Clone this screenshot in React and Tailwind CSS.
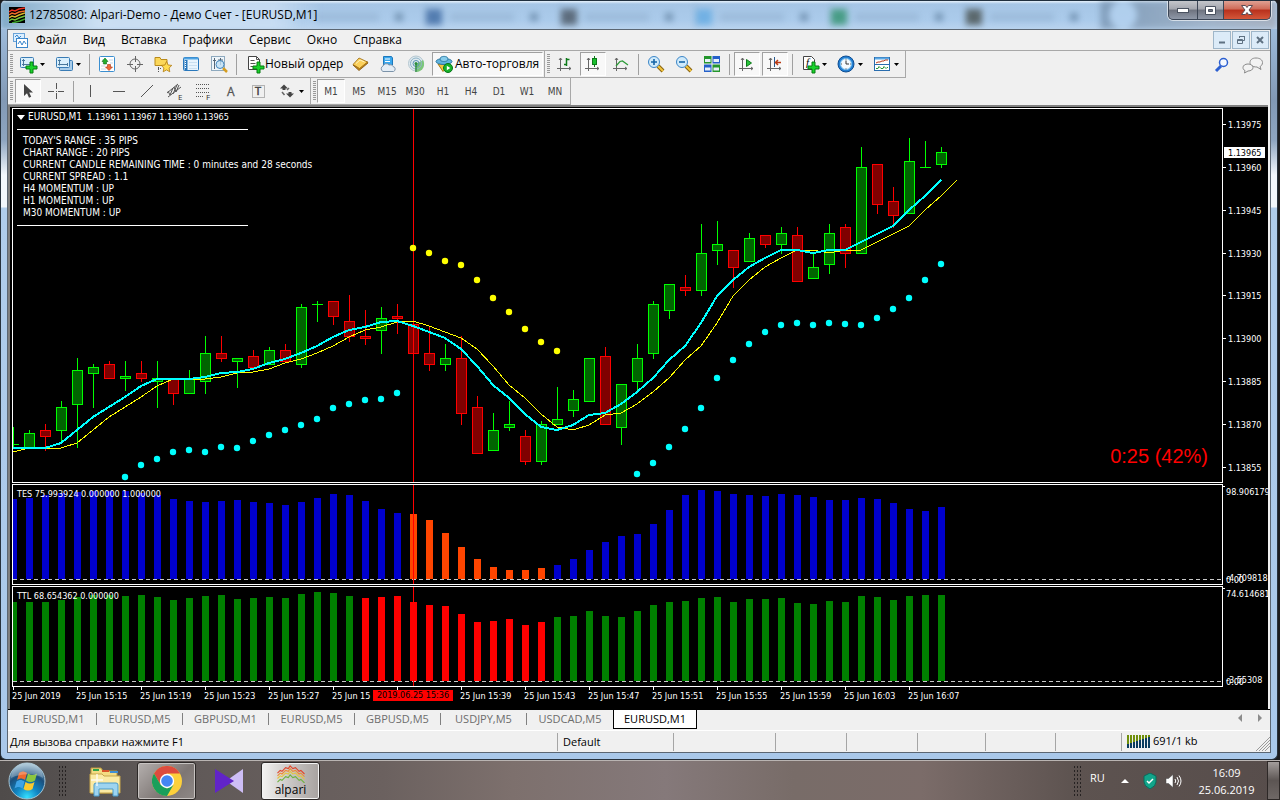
import clsx from 'clsx'

const STEP = 16
const SELECTED_X = 400

// [high, low, top, bottom, up]
const candles = [
	[427, 447, 444, 444, 1], [430, 447, 433, 447, 1], [424, 450, 430, 436, 0], [401, 443, 407, 430, 1],
	[358, 447, 370, 404, 1], [364, 407, 367, 373, 1], [361, 378, 364, 378, 0], [361, 390, 376, 378, 1],
	[361, 381, 373, 378, 0], [361, 407, 378, 381, 1], [379, 404, 379, 393, 0], [370, 393, 379, 393, 1],
	[336, 393, 353, 381, 1], [336, 361, 353, 358, 0], [358, 387, 358, 361, 1], [350, 367, 356, 367, 0],
	[347, 364, 350, 364, 1], [344, 361, 350, 361, 0], [304, 367, 307, 364, 1], [301, 321, 304, 304, 1],
	[301, 324, 301, 316, 0], [295, 341, 321, 336, 0], [310, 344, 336, 338, 0], [307, 353, 318, 330, 1],
	[304, 333, 316, 318, 0], [324, 353, 324, 353, 0], [327, 370, 353, 364, 0], [344, 370, 358, 364, 1],
	[336, 424, 358, 413, 0], [396, 453, 407, 453, 0], [413, 450, 430, 450, 1], [401, 430, 424, 427, 1],
	[430, 464, 436, 461, 0], [421, 464, 424, 461, 1], [387, 424, 419, 424, 1], [390, 416, 399, 410, 1],
	[358, 401, 358, 401, 1], [347, 424, 356, 424, 0], [384, 444, 384, 427, 1], [344, 389, 358, 381, 1],
	[301, 358, 304, 353, 1], [284, 318, 284, 310, 1], [275, 295, 287, 290, 0], [224, 295, 253, 290, 1],
	[221, 264, 244, 250, 1], [250, 287, 250, 267, 0], [233, 261, 238, 261, 1], [235, 247, 235, 244, 0],
	[227, 253, 233, 244, 1], [227, 281, 235, 281, 0], [253, 278, 267, 278, 1], [224, 273, 233, 264, 1],
	[224, 267, 227, 253, 0], [147, 253, 167, 253, 1], [164, 213, 164, 204, 0], [187, 227, 201, 215, 0],
	[138, 213, 161, 213, 1], [141, 167, 167, 167, 1], [147, 167, 152, 164, 1],
]

const average = [
	448, 448, 448, 443, 430, 417, 407, 397, 386, 379, 379, 379, 377, 373, 372, 369, 363, 359, 353, 346,
	337, 330, 327, 322, 321, 326, 332, 338, 349, 366, 385, 398, 414, 427, 430, 425, 415, 413, 404, 392,
	378, 360, 346, 323, 296, 280, 267, 258, 250, 250, 253, 250, 250, 242, 234, 226, 210, 196, 180,
]
const shifted = [452, ...average]

const dotRuns = [
	{ start: 7, color: '#00ffff', values: [477, 465, 459, 452, 450, 452, 447, 448, 441, 435, 430, 425, 419, 408, 404, 400, 399, 393] },
	{ start: 25, color: '#ffff00', values: [248, 253, 261, 265, 280, 298, 312, 329, 342, 351] },
	{ start: 39, color: '#00ffff', values: [474, 463, 447, 429, 408, 378, 360, 344, 332, 325, 323, 325, 323, 324, 325, 318, 309, 298, 280, 264] },
]

const tes = [
	499, 498, 495, 493, 492, 491, 491, 491, 493, 495, 499, 501, 502, 501, 500, 502, 503, 505, 502, 498,
	494, 495, 501, 509, 513, 514, 520, 533, 547, 559, 567, 570, 570, 568, 565, 559, 550, 542, 536, 534,
	524, 510, 495, 490, 491, 494, 495, 496, 494, 495, 497, 500, 500, 498, 499, 503, 509, 511, 507,
]

const ttl = [
	602, 602, 602, 600, 597, 595, 595, 596, 595, 597, 600, 598, 596, 595, 599, 598, 597, 598, 594, 592,
	593, 596, 598, 597, 596, 602, 605, 606, 614, 622, 621, 619, 625, 622, 617, 616, 611, 616, 617, 611,
	605, 602, 601, 598, 597, 602, 599, 599, 598, 603, 604, 601, 602, 596, 597, 600, 596, 595, 595,
]

const prices = [
	['1.13975', 124], ['1.13960', 167], ['1.13945', 210], ['1.13930', 253], ['1.13915', 295],
	['1.13900', 338], ['1.13885', 381], ['1.13870', 424], ['1.13855', 467],
]

// the slot under the crosshair label keeps only its tick
const dates = [
	'25 Jun 2019', '25 Jun 15:15', '25 Jun 15:19', '25 Jun 15:23', '25 Jun 15:27', '25 Jun 15', '',
	'25 Jun 15:39', '25 Jun 15:43', '25 Jun 15:47', '25 Jun 15:51', '25 Jun 15:55', '25 Jun 15:59', '25 Jun 16:03', '25 Jun 16:07',
]

const info = [
	"TODAY'S RANGE : 35 PIPS",
	'CHART RANGE : 20 PIPS',
	'CURRENT CANDLE REMAINING TIME : 0 minutes and 28 seconds',
	'CURRENT SPREAD : 1.1',
	'H4 MOMENTUM : UP',
	'H1 MOMENTUM : UP',
	'M30 MOMENTUM : UP',
]

const menu = ['Файл', 'Вид', 'Вставка', 'Графики', 'Сервис', 'Окно', 'Справка']
const periods = ['M1', 'M5', 'M15', 'M30', 'H1', 'H4', 'D1', 'W1', 'MN']
const charts = ['EURUSD,M1', 'EURUSD,M5', 'GBPUSD,M1', 'EURUSD,M5', 'GBPUSD,M5', 'USDJPY,M5', 'USDCAD,M5', 'EURUSD,M1']

const plus = <path d="M11 7h3v4h4v3h-4v4h-3v-4H7v-3h4z" fill="#19d32b" stroke="#067a10" />
const axes = <path d="M4.5 3v13M1 13.5h14M3 5l1.5-2L6 5M13 12l2 1.5-2 1.5" fill="none" stroke="#666" />
const lens = (
	<>
		<path d="M11 11l5 5" stroke="#8a6410" strokeWidth="4" />
		<path d="M11 11l5 5" stroke="#f2c53d" strokeWidth="2" />
		<circle cx="7" cy="7" r="5.5" fill="#cfeafb" stroke="#3c86c8" />
	</>
)

const icons = {
	newChart: <><rect x="1.5" y="2.5" width="13" height="10" rx="1" fill="#d9effc" stroke="#3a7cb5" /><path d="M4.5 4v7M3 9.5h9M3 5.5h3" stroke="#48769b" />{plus}</>,
	profiles: <><rect x="4.5" y="5.5" width="13" height="10" rx="1" fill="#a9cdea" stroke="#3a7cb5" /><rect x="1.5" y="2.5" width="13" height="10" rx="1" fill="#d9effc" stroke="#3a7cb5" /><path d="M4.5 4.5v6M3 5.5h3M3 9.5h10M12.5 8v3" stroke="#48769b" /></>,
	market: <><rect x="1.5" y="1.5" width="15" height="15" rx="1" fill="#fff" stroke="#3b8fd0" /><path d="M4 5h2M4 8h1M11 5h4M12 8h3M3 11h4M3 14h5" stroke="#c7d7e6" /><path d="M7 3l3 3.5H8.500V9h-3V6.500H4z" fill="#22b02c" stroke="#0d6d16" strokeWidth=".6" /><path d="M11 15.500L7.500 12H9.500V9.500h3V12h2z" fill="#f0683a" stroke="#a8320f" strokeWidth=".6" /></>,
	crosshair: <g fill="none" stroke="#666"><circle cx="9" cy="9" r="5" /><path d="M9.500 1v6M9.500 11v6M1 9.500h6M11 9.500h6" /></g>,
	favorites: <><path d="M1 2.500h5l1 2h6v6H1z" fill="#fbd75a" stroke="#b98a1b" /><path d="M4.500 12v5M4 13.500h4" stroke="#555" strokeDasharray="1 1" /><path d="M12.500 6.500l1.600 3.500 3.700.4-2.700 2.600.7 3.800-3.300-1.900-3.300 1.900.7-3.800-2.700-2.600 3.700-.4z" fill="#ffdc50" stroke="#b17b12" strokeWidth=".8" /></>,
	navigator: <><rect x="1.500" y="2.500" width="15" height="13" rx="1" fill="#e8f4fd" stroke="#2a78bc" /><path d="M2 3.500h14" stroke="#4da3e4" strokeWidth="2" /><path d="M4 5v10" stroke="#2a78bc" strokeWidth="3" /><path d="M3.500 6v8" stroke="#fff" strokeDasharray="1 1" /><path d="M7 7.500h8M7 10.500h8M7 13.500h8" stroke="#c9dff0" /></>,
	tester: <><rect x="1.500" y="1.500" width="13" height="14" fill="#eef5fa" stroke="#8ea9be" /><path d="M4.500 3v11M3 5.500h3M10.500 3v7M8 5h5" stroke="#567" /><path d="M13 13l4 4" stroke="#d59d20" strokeWidth="2.500" /><circle cx="10" cy="9.500" r="4" fill="#bfe0f5cc" stroke="#4587bd" /></>,
	order: <><path d="M2.500 1.500h8l3 3v10h-11z" fill="#fff" stroke="#444" /><path d="M10.500 1.500v3h3M4.500 5.500h4M4.500 8.500h5M4.500 11.500h3" fill="none" stroke="#555" />{plus}</>,
	book: <><path d="M2 10l6 5.500 9-7.500-1-1.500-8 6z" fill="#c78a17" stroke="#7d510b" strokeWidth=".8" /><path d="M2 9.500L8 3l8.500 4L8.500 13.500z" fill="#fbd05b" stroke="#9a6a10" strokeWidth=".8" /><path d="M5 8.500L9 5l4.500 2" stroke="#fff3bd" fill="none" /></>,
	server: <><path d="M4.500 1.500h8l1 1.500v7h-9z" fill="#39a8ee" stroke="#1d78bc" /><path d="M6 4h5M6 6.500h5" stroke="#fff" /><path d="M4 16.500a3 3 0 010-5.500 3.500 3.500 0 016-1 3 3 0 014 1.500 2.600 2.600 0 01.500 5z" fill="#e4edf5" stroke="#7c93a9" /></>,
	signal: <><circle cx="9" cy="8.500" r="7.500" fill="#dfeaf0" stroke="#b5c7d0" /><path d="M9 9l7-4a8 8 0 01-6 12z" fill="#7bc67a" /><g fill="none"><circle cx="9" cy="8.500" r="5.500" stroke="#8fb4c8" /><circle cx="9" cy="8.500" r="3" stroke="#5a93b4" /></g><circle cx="9" cy="8.500" r="1.500" fill="#2d8d3d" /><path d="M9 9v8" stroke="#2d8d3d" strokeWidth="1.500" /></>,
	auto: <><path d="M3 9l5 7.500L15 9z" fill="#f4c640" stroke="#a87912" /><ellipse cx="9" cy="6.500" rx="8" ry="3" fill="#5fb3de" stroke="#2a769f" /><ellipse cx="9" cy="4" rx="4" ry="2.700" fill="#87cdec" stroke="#2a769f" strokeWidth=".8" /><circle cx="13" cy="13" r="4.500" fill="#16b32a" stroke="#08761a" /><path d="M11.800 10.800v4.400l3.500-2.200z" fill="#fff" /></>,
	bars: <>{axes}<path d="M10.500 3v8M8 9.500h2M11 4.500h2.500" stroke="#0d7a19" strokeWidth="1.500" /></>,
	candles: <>{axes}<path d="M10.500 1v11" stroke="#0d7a19" /><rect x="8.500" y="3.500" width="4" height="6" fill="#18bf2d" stroke="#0d7a19" /></>,
	line: <>{axes}<path d="M4 11l4-4.500 2.500-.5L16 10" stroke="#2b9a36" fill="none" strokeWidth="1.200" /></>,
	zoomIn: <>{lens}<path d="M4 7h6M7 4v6" stroke="#1565a8" strokeWidth="1.600" /></>,
	zoomOut: <>{lens}<path d="M4 7h6" stroke="#1565a8" strokeWidth="1.600" /></>,
	tile: <><path d="M1 1h7.500v7.500H1zM9.500 9.500H17V17H9.500z" fill="#24962c" /><path d="M9.500 1H17v7.500H9.500zM1 9.500h7.500V17H1z" fill="#2560c9" /><path d="M2 4h5.500v3H2zM10.500 4H16v3h-5.500zM2 12.500h5.500v3H2zM10.500 12.500H16v3h-5.500z" fill="#e8f1fa" /></>,
	scroll: <>{axes}<path d="M8.500 4.500v7l5-3.500z" fill="#27c53a" stroke="#0d7a19" /></>,
	shift: <>{axes}<path d="M8.500 2v10" stroke="#26588c" /><path d="M15 7.500h-5M12 5l-2.500 2.500L12 10" fill="none" stroke="#b93a13" strokeWidth="1.500" /></>,
	indicator: <><path d="M2.500 1.500h8l3 3v10h-11z" fill="#fff" stroke="#444" /><text x="5" y="11" fontSize="11" fontStyle="italic" fontFamily="Liberation Serif, serif">f</text>{plus}</>,
	clock: <><circle cx="9" cy="9" r="8" fill="#2380d4" stroke="#0d4c91" /><circle cx="9" cy="9" r="5.500" fill="#f4fafe" stroke="#7fc4f3" /><path d="M9 5.500V9h3M9 4.500v-.8M9 14.300v-.8M4 9h.8M13.300 9h.8" stroke="#333" fill="none" /></>,
	template: <><rect x="1.500" y="2.500" width="15" height="13" fill="#fff" stroke="#2a6dae" /><path d="M2 3.500h14" stroke="#5ba9e6" strokeWidth="2" /><path d="M2 9.500h14" stroke="#2a6dae" /><path d="M3 8l2-1h2l2-1h2l1-1h3" fill="none" stroke="#b83a1c" /><path d="M3 13.500h2l1-2 2 2h2l1-2 2 2 1-1h1" fill="none" stroke="#279437" /></>,
	cursor: <path d="M5 2v12l3-2.800 2 4.600 2.200-1-2-4.400H14z" fill="#444" />,
	cross: <path d="M9.500 1v6M9.500 11v6M1 9.500h6M11 9.500h6M9 9.500h1" stroke="#555" />,
	vline: <path d="M8.500 3v12" stroke="#555" />,
	hline: <path d="M3 9.500h12" stroke="#555" />,
	trend: <path d="M3 15L15 3" stroke="#555" />,
	fibo: <><path d="M2 2.500h13M2 6.500h13M2 10.500h13M2 14.500h8" stroke="#555" strokeDasharray="1 1" /><text x="12" y="18" fontSize="8" fill="#333">F</text></>,
	channel: <><path d="M1 11L12 2M2 15L15 5M4 13l3-7M7 12l4-9M10 10l3-7M2 9l2 4M8 5l2 5" stroke="#555" fill="none" /><text x="12" y="18" fontSize="8" fill="#333">E</text></>,
	letter: <text x="5" y="14" fontSize="12" fill="#555" stroke="#555" strokeWidth=".3">A</text>,
	label: <><rect x="2.500" y="3.500" width="12" height="12" fill="none" stroke="#777" strokeDasharray="1 1" /><text x="5" y="13" fontSize="11" fill="#444" stroke="#444" strokeWidth=".5">T</text></>,
	arrows: <><path d="M6 2.500l4 4H7.500V8h-3V6.500H2zM12 15.500l-4-4h2.500V10h3v1.500H16z" fill="#444" /><path d="M4 10l2.500 3M9 8l2-2" stroke="#666" strokeWidth="1.500" /></>,
}

function Icon({ name }) {
	return <svg width="18" height="18" viewBox="0 0 18 18" className="shrink-0 overflow-visible">{icons[name]}</svg>
}

function Caret() {
	return <svg width="5" height="3" viewBox="0 0 5 3" className="shrink-0"><path d="M0 0h5L2.500 3z" fill="#000" /></svg>
}

function ToolButton({ name, pressed }) {
	return (
		<button aria-label={name} aria-pressed={!!pressed} className="flex h-6 w-7 items-center justify-center">
			<span className={clsx('flex h-6 w-[26px] items-center justify-center', pressed && 'border border-r-white border-b-white border-l-[#a0a0a0] border-t-[#a0a0a0] bg-[#f8f8f8]')}>
				<Icon name={name} />
			</span>
		</button>
	)
}

function DropButton({ name }) {
	return (
		<button aria-label={name} className="flex h-6 w-9 items-center gap-[3px] pl-[5px]">
			<Icon name={name} />
			<Caret />
		</button>
	)
}

function Separator() {
	return <div className="mx-[3px] h-[21px] w-px bg-[#a0a0a0]" />
}

function Toolbar({ children }) {
	return (
		<div className="flex h-[27px] items-center border-b border-r border-[#a8a8a8] pl-[2px] pr-px">
			<div className="mr-px h-5 w-[3px] bg-[repeating-linear-gradient(180deg,#9a9a9a_0_1px,#efefef_1px_2px)]" />
			{children}
		</div>
	)
}

function TitleBar() {
	const ghosts = ['bg-[#9fc3e6]', 'bg-[#2f5c98]', 'bg-[#3d4650]', 'bg-[#5aa7e2]', 'bg-[#1f8a5c]', 'bg-[#3a3f38]']
	return (
		<header className="relative flex h-[29px] shrink-0 items-start overflow-hidden border-t border-[#20303f] bg-[linear-gradient(180deg,#e6f1fb_0,#a6c6e6_3px,#abcbeb_70%,#b9d3ee_100%)] pl-2">
			<div aria-hidden="true" className="absolute inset-0 flex pl-[290px] opacity-70 blur-[3px]">
				{ghosts.map((color, i) => (
					<div key={i} className="flex w-[135px] items-center border-r border-[#8fabc8] pt-1">
						<div className={clsx('h-4 w-4', color)} />
						<div className="ml-2 h-2 w-16 bg-[#97b5d4]" />
						<div className="ml-4 h-2 w-2 bg-[#5f7f9f]" />
					</div>
				))}
				<div className="flex flex-1 items-center bg-[linear-gradient(90deg,#6f8ba8,#9aa9bb_60%,#a3a5ae)] pl-2">
					<div className="h-7 w-7 rounded-full bg-[#b4d2f0]" />
				</div>
			</div>
			<div aria-hidden="true" className="absolute inset-y-0 left-0 w-80 bg-[linear-gradient(90deg,#6f9cb8_0,#d7e7f6_30%,#d2e3f5_85%,transparent)] opacity-70 blur-[2px]" />
			<svg width="16" height="16" viewBox="0 0 16 16" className="relative mt-[6px]">
				<rect width="16" height="16" fill="#000" />
				<g fill="none" strokeWidth="1.500">
					<path d="M0 5l3-2 3 1 4-2 6-1" stroke="#f03020" /><path d="M0 8l3-2 3 1 4-2 6-1" stroke="#f06a28" />
					<path d="M0 11l3-2 3 1 4-2 6-2" stroke="#d6b52c" /><path d="M0 14l3-2 3 1 4-2 6-2" stroke="#74c23a" /><path d="M3 16l4-1 4-1 5-2" stroke="#3da52c" />
				</g>
			</svg>
			<h1 className="relative ml-1 mt-[6px] flex-1 text-[12px] leading-4 text-black">12785080: Alpari-Demo - Демо Счет - [EURUSD,M1]</h1>
			<div className="relative mr-[6px] flex h-[19px] overflow-hidden rounded-b-[5px] border border-t-0 border-[#3c4656] bg-[#3c4656] shadow-[0_0_0_1px_#ffffff99]">
				<button aria-label="Свернуть" className="flex w-7 items-center justify-center bg-[linear-gradient(180deg,#c4c6cb_0,#a3a6ae_45%,#6e737f_50%,#8f98a8_100%)]">
					<svg width="14" height="8"><rect x="1.500" y="2.500" width="11" height="4" fill="#fff" stroke="#4a5260" /></svg>
				</button>
				<button aria-label="Развернуть" className="ml-px flex w-[25px] items-center justify-center bg-[linear-gradient(180deg,#c4c6cb_0,#a3a6ae_45%,#6e737f_50%,#8f98a8_100%)]">
					<svg width="13" height="11"><path d="M1.500 1.500h10v8h-10zM4.500 4.500v2h4v-2z" fill="#fff" fillRule="evenodd" stroke="#4a5260" /></svg>
				</button>
				<button aria-label="Закрыть" className="ml-px flex w-[46px] items-center justify-center bg-[linear-gradient(180deg,#e0a193_0,#cf6a57_45%,#b8301c_50%,#d4573a_100%)]">
					<svg width="14" height="12"><path d="M1.500 1.500h4L7 3.500l1.500-2h4L9 6l3.500 4.500h-4L7 8.500l-1.500 2h-4L5 6z" fill="#fff" stroke="#5a4a52" /></svg>
				</button>
			</div>
		</header>
	)
}

function MenuBar() {
	const mdi = 'flex h-[18px] w-[18px] items-center justify-center border border-[#9fb6c9] bg-[#dcebf8]'
	return (
		<nav className="flex h-[21px] items-center border-b border-[#a8a8a8] pl-[5px] pr-px text-[12px]">
			<svg width="15" height="15" viewBox="0 0 15 15">
				<rect x=".5" y=".5" width="11" height="8" fill="#dcefff" stroke="#6aa3d8" /><rect x="3.500" y="5.500" width="11" height="9" fill="#fff" stroke="#3b86cb" />
				<path d="M2 4l2-2 2 3 2-2M5 11l2-3 2 4 2-4 2 3" fill="none" stroke="#3b86cb" />
			</svg>
			{menu.map((item) => <button key={item} className="px-2 leading-5">{item}</button>)}
			<div className="ml-auto flex gap-px">
				<button aria-label="Свернуть график" className={mdi}><svg width="10" height="10"><path d="M2 7.500h6" stroke="#5f7182" strokeWidth="2" /></svg></button>
				<button aria-label="Восстановить график" className={mdi}><svg width="10" height="10"><path d="M3.500 3V1.500h5v4H7M1.500 4.500h5v4h-5zM1 5.500h6M3 1.500h6" fill="none" stroke="#5f7182" /></svg></button>
				<button aria-label="Закрыть график" className={mdi}><svg width="10" height="10"><path d="M2 2l6 6M8 2L2 8" stroke="#5f7182" strokeWidth="2" /></svg></button>
			</div>
		</nav>
	)
}

function Toolbars() {
	return (
		<div className="shrink-0 text-[12px]">
			<div className="flex items-center">
				<Toolbar>
					<DropButton name="newChart" /><DropButton name="profiles" />
					<Separator />
					<ToolButton name="market" /><ToolButton name="crosshair" /><ToolButton name="favorites" /><ToolButton name="navigator" /><ToolButton name="tester" />
					<Separator />
					<button className="flex h-6 w-[106px] items-center gap-px whitespace-nowrap pl-[6px]"><Icon name="order" />Новый ордер</button>
					<ToolButton name="book" /><ToolButton name="server" /><ToolButton name="signal" />
					<button aria-pressed="true" className="ml-[2px] flex h-6 w-[111px] items-center gap-[2px] whitespace-nowrap border border-b-white border-l-[#a0a0a0] border-r-white border-t-[#a0a0a0] bg-[#f8f8f8] pl-[2px]"><Icon name="auto" />Авто-торговля</button>
				</Toolbar>
				<Toolbar>
					<ToolButton name="bars" /><ToolButton name="candles" pressed /><ToolButton name="line" />
					<Separator />
					<ToolButton name="zoomIn" /><ToolButton name="zoomOut" /><ToolButton name="tile" />
					<Separator />
					<ToolButton name="scroll" pressed /><ToolButton name="shift" pressed />
					<Separator />
					<DropButton name="indicator" /><DropButton name="clock" /><DropButton name="template" />
				</Toolbar>
				<div className="ml-auto flex items-center gap-3 pr-[6px]">
					<button aria-label="Поиск"><svg width="16" height="16" viewBox="0 0 16 16"><path d="M7 9l-5 5" stroke="#2c5fd0" strokeWidth="3" /><circle cx="9.500" cy="5.500" r="4" fill="#f4f8ff" stroke="#2c5fd0" strokeWidth="1.500" /></svg></button>
					<button aria-label="Чат"><svg width="22" height="18" viewBox="0 0 22 18"><g fill="#f3f3f3" stroke="#8a8a8a"><path d="M14 2c4 0 6.500 2 6.500 4.500S19 10 18 10.500l1 3-4-2.500C10 11 8 9 8 6.500S10 2 14 2z" /><path d="M6 8c3 0 5 1.500 5 3.500S9 15 6 15l-3.500 2 .5-2.500C1.500 14 1 12.800 1 11.500 1 9.500 3 8 6 8z" /></g></svg></button>
				</div>
			</div>
			<div className="flex items-center">
				<Toolbar>
					<ToolButton name="cursor" pressed /><ToolButton name="cross" />
					<Separator />
					<ToolButton name="vline" /><ToolButton name="hline" /><ToolButton name="trend" /><ToolButton name="channel" /><ToolButton name="fibo" /><ToolButton name="letter" /><ToolButton name="label" />
					<DropButton name="arrows" />
				</Toolbar>
				<Toolbar>
					{periods.map((item, i) => (
						<button key={item} className={clsx('h-6 w-7 border text-center font-["DejaVu_Sans_Condensed","Open_Sans",sans-serif] text-[10px] text-[#444]', i === 0 ? 'border-b-white border-l-[#a0a0a0] border-r-white border-t-[#a0a0a0] bg-[#f8f8f8]' : 'border-transparent')}>{item}</button>
					))}
				</Toolbar>
			</div>
		</div>
	)
}

function Pane({ top, children, overlay, axis, className }) {
	return (
		<div className={clsx('flex', className)}>
			<div className="relative flex-1 overflow-hidden border border-white">
				<svg className="absolute inset-0 h-full w-full" shapeRendering="crispEdges">
					<g transform={`translate(0 ${-top})`}>{children}</g>
				</svg>
				{overlay}
			</div>
			<svg className="h-full w-[45px] shrink-0 overflow-hidden" fill="#fff" fontSize="9">
				<g transform={`translate(0 ${1 - top})`}>{axis}</g>
			</svg>
		</div>
	)
}

function Crosshair() {
	return <line x1={SELECTED_X + 0.5} x2={SELECTED_X + 0.5} y1="0" y2="800" stroke="#f00" />
}

function Histogram({ values, base, color }) {
	return (
		<>
			{values.map((y, i) => <rect key={i} x={i * STEP - 3} y={y} width="7" height={base - y} fill={color(i)} />)}
			<line x1="0" x2="2000" y1={base + 0.5} y2={base + 0.5} stroke="#c8c8c8" strokeDasharray="4 3" />
			<Crosshair />
		</>
	)
}

const toPoints = (values) => values.map((y, i) => `${i * STEP},${y}`).join(' ')

function Chart() {
	return (
		<main className='flex min-h-0 flex-1 flex-col border-l-2 border-t-2 border-[#808080] bg-black pl-[2px] pt-px font-["DejaVu_Sans_Condensed","Open_Sans",sans-serif] text-[9px] text-white'>
			<Pane
				top={109}
				className="min-h-0 flex-1"
				overlay={
					<>
						<div className="absolute left-1 top-[2px] whitespace-pre text-[10px] leading-3">
							<p className="flex items-center">
								<svg width="11" height="5"><path d="M0 0h8L4 5z" fill="#fff" /></svg>
								EURUSD,M1<span className="text-[9px]">  1.13961 1.13967 1.13960 1.13965</span>
							</p>
							<div className="flex h-3 items-center"><div className="w-[231px] border-t border-white" /></div>
							{info.map((line) => <p key={line} className="pl-[6px]">{line}</p>)}
							<div className="flex h-3 items-center"><div className="w-[231px] border-t border-white" /></div>
						</div>
						<p className='absolute bottom-3 right-[14px] font-["Liberation_Sans",Arial,sans-serif] text-[20px] leading-7 text-[#f00]'>0:25 (42%)</p>
					</>
				}
				axis={
					<>
						{prices.map(([price, y]) => (
							<g key={price}><rect y={y} width="3" height="1" /><text x="5" y={y + 4}>{price}</text></g>
						))}
						<rect x="1" y="147" width="41" height="11" />
						<text x="5" y="156" fill="#000">1.13965</text>
					</>
				}
			>
				{candles.map(([high, low, top, bottom, up], i) => {
					const x = i * STEP
					return (
						<g key={i} stroke={up ? '#00ff00' : '#ff0000'} fill={up ? '#006400' : '#800000'}>
							<line x1={x + 0.5} x2={x + 0.5} y1={high} y2={low + 1} />
							{top === bottom
								? <line x1={x - 5} x2={x + 6} y1={top + 0.5} y2={top + 0.5} />
								: <rect x={x - 4.5} y={top + 0.5} width="10" height={bottom - top} />}
						</g>
					)
				})}
				<Crosshair />
				<polyline points={toPoints(shifted)} fill="none" stroke="#ffff00" />
				<polyline points={toPoints(average)} fill="none" stroke="#00ffff" strokeWidth="2" />
				<g shapeRendering="auto">
					{dotRuns.map((run) => run.values.map((y, i) => (
						<circle key={`${run.start}-${i}`} cx={(run.start + i) * STEP} cy={y} r="3.200" fill={run.color} />
					)))}
				</g>
			</Pane>
			<Pane
				top={485}
				className="mt-px h-[101px]"
				overlay={<p className="absolute left-1 top-[3px] leading-3">TES 75.993924 0.000000 1.000000</p>}
				axis={<><rect y="486" width="2" height="1" /><text x="3" y="495">98.906179</text><text x="3" y="583">0.00</text><text x="3" y="581">-4.709818</text></>}
			>
				<Histogram values={tes} base={579} color={(i) => (i >= 25 && i <= 33 ? '#ff4500' : '#0000cd')} />
			</Pane>
			<Pane
				top={587}
				className="mt-px h-[101px]"
				overlay={<p className="absolute left-1 top-[3px] leading-3">TTL 68.654362 0.000000</p>}
				axis={<><rect y="588" width="2" height="1" /><text x="3" y="597">74.614681</text><text x="3" y="685">0.00</text><text x="3" y="683">-3.55308</text></>}
			>
				<Histogram values={ttl} base={681} color={(i) => (i >= 22 && i <= 33 ? '#ff0000' : '#008000')} />
			</Pane>
			<div className="relative flex h-[22px] shrink-0 overflow-hidden whitespace-nowrap">
				{dates.map((date, i) => (
					<div key={i} className="w-16 shrink-0">
						<div className="ml-px h-[3px] w-px bg-white" />
						<p className="leading-3">{date}</p>
					</div>
				))}
				<p className="absolute left-[361px] top-[3px] h-[11px] w-20 bg-[#f00] text-center leading-[11px] text-black">2019.06.25 15:36</p>
			</div>
		</main>
	)
}

function ChartTabs() {
	return (
		<div className="flex h-[21px] shrink-0 items-start border-t border-black pl-[3px] text-[11px] text-[#6d6d6d]">
			{charts.map((chart, i) => {
				const active = i === charts.length - 1
				return (
					<button key={i} className={clsx('flex items-center', active ? 'h-[19px] w-[84px] justify-center border border-t-0 border-black bg-white text-black' : 'h-[18px] w-[86px]')}>
						<span className={clsx(!active && 'flex-1 text-center')}>{chart}</span>
						{!active && i < 6 && <span className="h-3 w-px bg-[#808080]" />}
					</button>
				)
			})}
			<div className="ml-auto mr-2 flex gap-4 pt-1">
				<button aria-label="Назад"><svg width="4" height="8"><path d="M4 0v8L0 4z" fill="#8c8c8c" /></svg></button>
				<button aria-label="Вперед"><svg width="4" height="8"><path d="M0 0v8l4-4z" fill="#8c8c8c" /></svg></button>
			</div>
		</div>
	)
}

function StatusBar() {
	return (
		<footer className="flex h-[22px] shrink-0 items-center border-t border-white text-[11px] text-black [&>*+*]:border-l [&>*+*]:border-[#a5a5a5]">
			<p className="flex-1 pl-[2px] leading-[18px]">Для вызова справки нажмите F1</p>
			<p className="w-[116px] pl-[5px] leading-[18px]">Default</p>
			<div className="h-[18px] w-[102px]" />
			<div className="h-[18px] w-[71px]" />
			<div className="h-[18px] w-[71px]" />
			<div className="h-[18px] w-[68px]" />
			<div className="h-[18px] w-[70px]" />
			<div className="h-[18px] w-[66px]" />
			<div className="flex h-[18px] w-[149px] items-center gap-[3px] pl-[5px]">
				<svg width="23" height="13" shapeRendering="crispEdges">
					{Array.from({ length: 8 }, (_, i) => (
						<g key={i}><rect x={i * 3} width="2" height="13" fill="#0b3c5f" /><rect x={i * 3} width="2" height={9 - i} fill="#6f8f0a" /></g>
					))}
				</svg>
				691/1 kb
				<svg width="15" height="15" className="ml-auto self-end"><path d="M1 15L15 1M4 15L15 4M7 15l8-8M10 15l5-5" stroke="#9a9a9a" /></svg>
			</div>
		</footer>
	)
}

function Dots() {
	return <div className="h-8 w-2 bg-[radial-gradient(circle,#262222_1px,transparent_1px)] bg-[length:3px_4px]" />
}

function Taskbar() {
	return (
		<div className="flex h-10 shrink-0 items-center border-t border-[#b9b4b2] bg-[linear-gradient(90deg,#4f4b4a_0,#5e5857_12%,#6b615f_30%,#7d706d_40%,#85797a_52%,#786c68_62%,#7b6c69_72%,#5d5350_84%,#574d4b_100%)] pl-2 text-white">
			<button aria-label="Пуск">
				<svg width="38" height="38" viewBox="0 0 38 38">
					<defs>
						<radialGradient id="orb" cx=".5" cy=".95" r=".9"><stop offset="0" stopColor="#35e0ff" /><stop offset=".35" stopColor="#1186c4" /><stop offset=".7" stopColor="#1b4f7c" /><stop offset="1" stopColor="#8fb3c9" /></radialGradient>
					</defs>
					<circle cx="19" cy="19" r="18" fill="url(#orb)" stroke="#a3c3d3" />
					<path d="M11 11c3-2 5-2 8 0l-2 7c-3-2-5-2-8 0z" fill="#ef6a2d" />
					<path d="M20 11.500c3 2 6 2 9 0l-2 7c-3 2-6 2-9 0z" fill="#8cc63f" />
					<path d="M8.500 19.500c3-2 5-2 8 0l-2 7c-3-2-5-2-8 0z" fill="#3ea3e6" />
					<path d="M17.500 20c3 2 6 2 9 0l-2 7c-3 2-6 2-9 0z" fill="#fbc92e" />
					<path d="M3 16a16 15 0 0132 0c-8-5-22-5-32 0z" fill="#fff" opacity=".25" />
				</svg>
			</button>
			<div className="ml-3"><Dots /></div>
			<button aria-label="Проводник" className="ml-[22px]">
				<svg width="34" height="32" viewBox="0 0 34 32">
					<path d="M3 3h10l2 3h14v22H3z" fill="#f4dc83" stroke="#b8963c" /><path d="M5 4h6v2H5z" fill="#32a54a" /><path d="M14 5h7v2h-7z" fill="#d9542b" /><path d="M22 6h8v2h-8z" fill="#3f8fd6" />
					<path d="M2 9h12l2 2h16v17H2z" fill="#fbeaa4" stroke="#c5a54b" />
					<path d="M6 31V20q0-2 2-2h20q2 0 2 2v11h-5v-7H11v7z" fill="#9ed4f0" stroke="#4a9bc9" />
					<path d="M9 9v12M3 15h12" stroke="#fff" strokeWidth="1.500" opacity=".8" />
				</svg>
			</button>
			<button aria-label="Chrome" className="ml-[15px] flex h-[38px] w-[59px] items-center justify-center rounded-[3px] border border-[#2c2827] bg-[linear-gradient(135deg,#b5b0ae,#7d7674_60%,#8f8987)] shadow-[inset_0_0_0_1px_#c7c3c1]">
				<svg width="30" height="30" viewBox="0 0 30 30">
					<circle cx="15" cy="15" r="15" fill="#fdd03b" /><path d="M2 7.500A15 15 0 0128 7.500H15L8.500 18.500z" fill="#dd4b3e" /><path d="M2 7.500A15 15 0 0015 30l6.500-11.200L15 22.500l-6.500-4z" fill="#1a9f5b" />
					<circle cx="15" cy="15" r="7.200" fill="#fff" /><circle cx="15" cy="15" r="5.800" fill="#4486f4" />
				</svg>
			</button>
			<button aria-label="KMPlayer" className="ml-[19px]">
				<svg width="28" height="24" viewBox="0 0 28 24"><path d="M28 0v24L11 12z" fill="#cdbdf5" /><path d="M0 0l19 12L0 24z" fill="#6124c8" /></svg>
			</button>
			<button aria-label="Alpari" className="ml-[18px] flex h-[38px] w-[59px] flex-col items-center rounded-[3px] border border-[#2c2827] bg-[linear-gradient(90deg,#f3f2f1,#c9c6c4_50%,#a7a2a0)] text-[12px] leading-[14px] text-black shadow-[inset_0_0_0_1px_#f3f3f3]">
				<svg width="32" height="18" viewBox="0 0 32 20" className="mt-[2px] shrink-0">
					<g fill="none" strokeWidth="1.200">
						<path d="M1 9l3-3 2 1 4-4 3 1 2-3 3 3 3-1 4 4 2-1 4 4" stroke="#e0452b" /><path d="M1 12l3-3 2 1 4-4 3 1 2-3 3 3 3-1 4 4 2-1 4 4" stroke="#f08a33" />
						<path d="M1 15l3-3 2 1 4-4 3 1 2-3 3 3 3-1 4 4 2-1 4 4" stroke="#e6c63a" /><path d="M1 19l3-3 2 1 4-4 3 1 2-3 3 3 3-1 4 4 2-1 4 4" stroke="#6db23d" />
					</g>
				</svg>
				alpari
			</button>
			<div className="ml-auto flex h-full items-center">
				<Dots />
				<span className="ml-[9px] w-[17px] pb-1 text-[11px]">RU</span>
				<button aria-label="Значки" className="ml-[14px]"><svg width="8" height="4"><path d="M0 4h8L4 0z" fill="#fff" /></svg></button>
				<svg width="14" height="16" viewBox="0 0 14 16" className="ml-[14px]"><path d="M7 0l6 3v6q0 4-6 7-6-3-6-7V3z" fill="#12a58a" stroke="#0b6a5b" /><path d="M4 8l2 2 4-4" fill="none" stroke="#fff" strokeWidth="1.500" /></svg>
				<svg width="17" height="16" viewBox="0 0 17 16" className="ml-2"><path d="M1 5.500h2.500L8 1.500v13l-4.500-4H1z" fill="#fff" stroke="#444" strokeWidth=".5" /><path d="M10 6q1.500 2 0 4M12 4q3 4 0 8M14 2.500q4 5.500 0 11" fill="none" stroke="#fff" /></svg>
				<time className="w-[85px] pl-1 text-center text-[11px] leading-[17px]">16:09<br />25.06.2019</time>
				<button aria-label="Свернуть все окна" className="h-full w-[13px] border border-[#2d2827] bg-[linear-gradient(180deg,#a39d9b,#5c5553_50%,#6f6866)]" />
			</div>
		</div>
	)
}

export default function App() {
	return (
		<div className='flex h-screen flex-col bg-[#1d1d1f] font-["Open_Sans","Noto_Sans",sans-serif] text-black'>
			<div className="mr-[2px] flex min-h-0 flex-1 flex-col overflow-hidden rounded-[6px] border-x border-b border-[#27323d] bg-[linear-gradient(180deg,#a9c9ea_0,#8299b5_100px,#8ea5c0_140px,#f2f7fc_175px,#f2f7fc_207px,#b0cdeb_208px,#a9c8ea_100%)]">
				<TitleBar />
				<div className="mx-[6px] mb-[6px] flex min-h-0 flex-1 flex-col border border-[#5b6672] bg-[#f0f0f0]">
					<MenuBar />
					<Toolbars />
					<div className="flex min-h-0 flex-1 flex-col pr-[2px]"><Chart /></div>
					<ChartTabs />
					<StatusBar />
				</div>
			</div>
			<Taskbar />
		</div>
	)
}
